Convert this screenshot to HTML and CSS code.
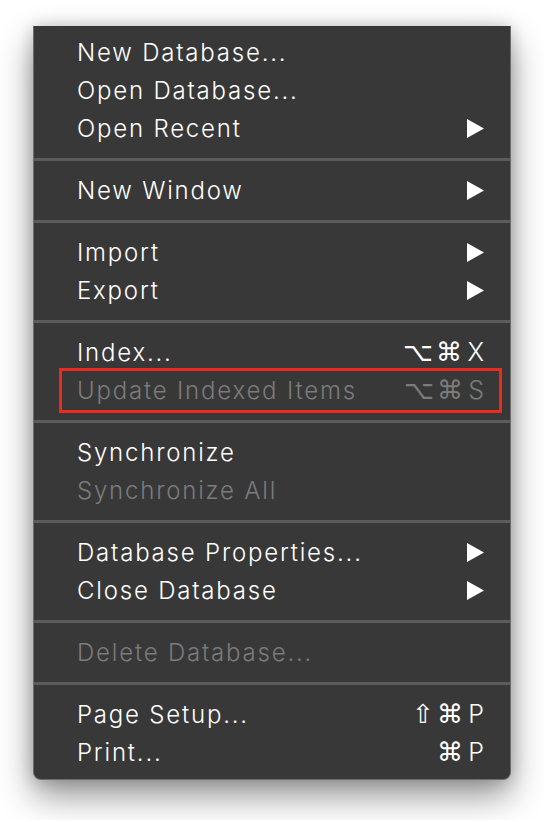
FILE: index.html
```html
<!DOCTYPE html>
<html>
<head>
<meta charset="utf-8">
<link rel="stylesheet" href="styles.css">
</head>
<body>
<div class="menu">
  <div class="item"><span class="label">New Database...</span></div>
  <div class="item"><span class="label">Open Database...</span></div>
  <div class="item"><span class="label">Open Recent</span><svg class="arrow" viewBox="0 0 18 20"><polygon points="0,0 18,10 0,20"/></svg></div>
  <div class="sep"></div>
  <div class="item"><span class="label">New Window</span><svg class="arrow" viewBox="0 0 18 20"><polygon points="0,0 18,10 0,20"/></svg></div>
  <div class="sep"></div>
  <div class="item"><span class="label">Import</span><svg class="arrow" viewBox="0 0 18 20"><polygon points="0,0 18,10 0,20"/></svg></div>
  <div class="item"><span class="label">Export</span><svg class="arrow" viewBox="0 0 18 20"><polygon points="0,0 18,10 0,20"/></svg></div>
  <div class="sep"></div>
  <div class="item"><span class="label">Index...</span><span class="key"><span class="sym">⌥⌘</span>X</span></div>
  <div class="item disabled marked"><span class="label">Update Indexed Items</span><span class="key"><span class="sym">⌥⌘</span>S</span></div>
  <div class="sep"></div>
  <div class="item"><span class="label">Synchronize</span></div>
  <div class="item disabled"><span class="label">Synchronize All</span></div>
  <div class="sep"></div>
  <div class="item"><span class="label">Database Properties...</span><svg class="arrow" viewBox="0 0 18 20"><polygon points="0,0 18,10 0,20"/></svg></div>
  <div class="item"><span class="label">Close Database</span><svg class="arrow" viewBox="0 0 18 20"><polygon points="0,0 18,10 0,20"/></svg></div>
  <div class="sep"></div>
  <div class="item disabled"><span class="label">Delete Database...</span></div>
  <div class="sep"></div>
  <div class="item"><span class="label">Page Setup...</span><span class="key"><span class="sym">⇧⌘</span>P</span></div>
  <div class="item"><span class="label">Print...</span><span class="key"><span class="sym">⌘</span>P</span></div>
</div>
</body>
</html>
```
FILE: styles.css
```css
html, body {
  margin: 0;
  padding: 0;
  background: #ffffff;
}
body {
  padding-top: 26px;
  padding-left: 33px;
  padding-bottom: 40px;
  font-family: Inter, "Open Sans", "DejaVu Sans", sans-serif;
}
.menu {
  width: 476px;
  background: #383838;
  border: 1px solid #6c6c6c;
  border-top: none;
  border-radius: 0 0 8px 8px;
  padding: 7px 0 8px 0;
  box-shadow: 0 16px 34px rgba(0, 0, 0, 0.42), 0 0 16px rgba(0, 0, 0, 0.18);
}
.item {
  position: relative;
  height: 38px;
  display: flex;
  align-items: center;
  justify-content: space-between;
  padding: 0 25px 0 43px;
  color: #ffffff;
  font-size: 24px;
  font-weight: 350;
}
.item.disabled {
  color: #7b7b7b;
}
.label {
  white-space: nowrap;
  letter-spacing: 1.8px;
}
.arrow {
  width: 17px;
  height: 19px;
  margin-right: 1px;
}
.arrow polygon {
  fill: #ffffff;
}
.key {
  display: flex;
  align-items: center;
  white-space: nowrap;
  font-size: 25px;
  margin-right: 1px;
}
.sym {
  font-family: "DejaVu Sans", sans-serif;
  font-size: 26px;
  letter-spacing: 3px;
  margin-right: 2px;
}
.sep {
  height: 3px;
  background: #5b5b5b;
  margin: 11px 0 10px 0;
}
.marked::after {
  content: "";
  position: absolute;
  left: 25px;
  right: 8px;
  top: -3px;
  bottom: -4px;
  border: 3px solid #ee2a1f;
}
```
